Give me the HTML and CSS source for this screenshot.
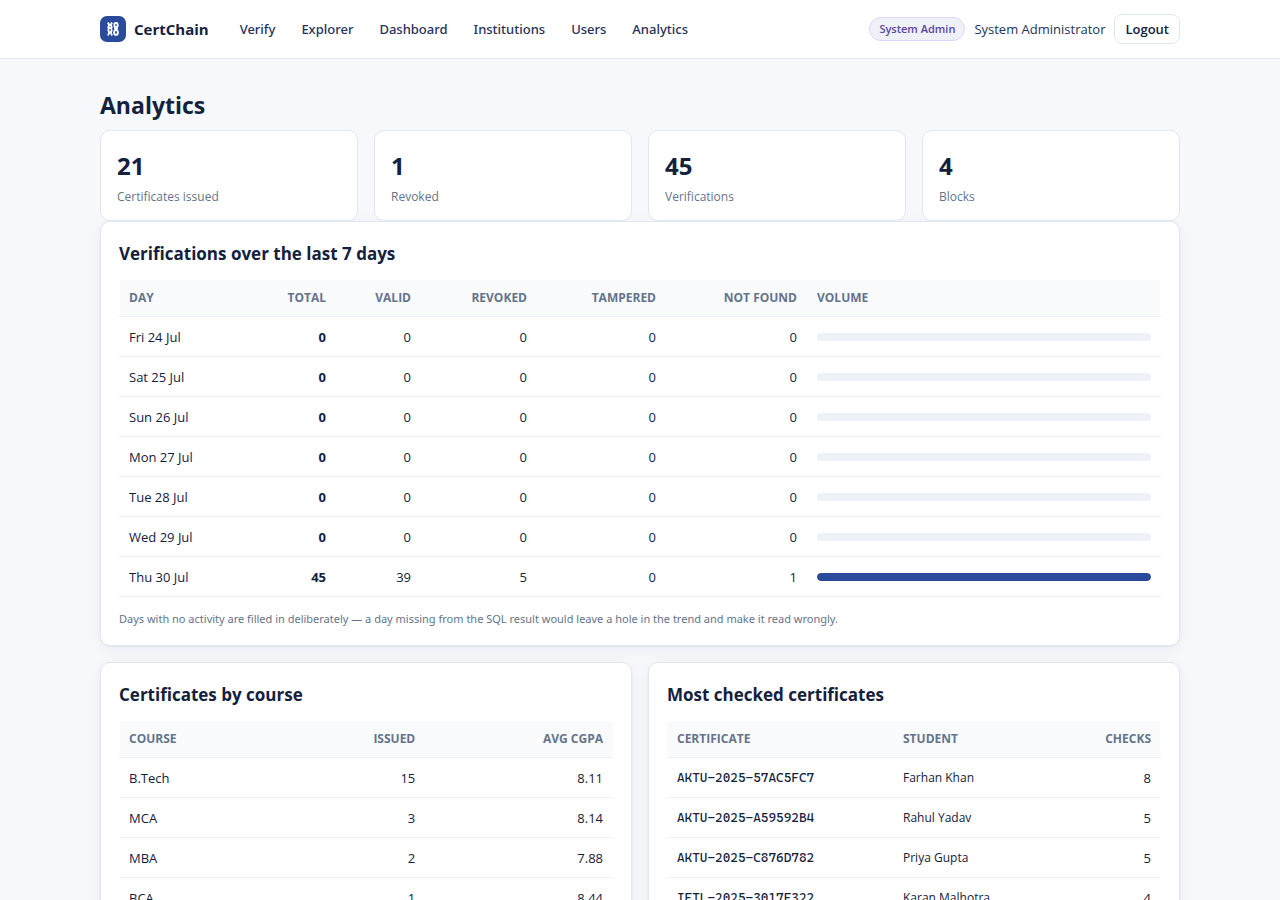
FILE: index.html
```
<!DOCTYPE html>
<html lang="en">
<head>
    <meta charset="UTF-8">
    <meta name="viewport" content="width=device-width, initial-scale=1.0">
    <title>Analytics - CertChain</title>
    <link rel="stylesheet" href="styles.css">
</head>
<body>
    <header class="topbar">
        <div class="container topbar-inner">
            <a class="brand" href="#">
                <span class="brand-mark">
                    <svg width="12" height="14" viewBox="0 0 12 14" fill="none" stroke="#fff" stroke-width="1.9" aria-hidden="true">
                        <path d="M1 0.5L2.2 3L1 6M5 0.5L3.8 3L5 6M1.5 3H4.5M0.8 6.3H5.2M1 13.5L2.2 10.5L1 7.5M5 13.5L3.8 10.5L5 7.5M1.5 10.5H4.5"/>
                        <ellipse cx="9" cy="3" rx="1.7" ry="2.2"/>
                        <path d="M9 5V9M7 6.5H11"/>
                        <ellipse cx="9" cy="10.5" rx="1.9" ry="2.4"/>
                    </svg>
                </span>
                CertChain
            </a>
            <nav class="nav">
                <a href="#">Verify</a>
                <a href="#">Explorer</a>
                <a href="#">Dashboard</a>
                <a href="#">Institutions</a>
                <a href="#">Users</a>
                <a href="#">Analytics</a>
            </nav>
            <div class="user">
                <span class="role">System Admin</span>
                <span class="user-name">System Administrator</span>
                <button type="button" class="btn">Logout</button>
            </div>
        </div>
    </header>

    <main class="container main">
        <h1>Analytics</h1>

        <div class="stats">
            <div class="stat"><div class="stat-num">21</div><div class="stat-label">Certificates issued</div></div>
            <div class="stat"><div class="stat-num">1</div><div class="stat-label">Revoked</div></div>
            <div class="stat"><div class="stat-num">45</div><div class="stat-label">Verifications</div></div>
            <div class="stat"><div class="stat-num">4</div><div class="stat-label">Blocks</div></div>
        </div>

        <section class="card">
            <h2>Verifications over the last 7 days</h2>
            <table class="table">
                <colgroup>
                    <col class="col-day"><col class="col-total"><col class="col-valid"><col class="col-revoked">
                    <col class="col-tampered"><col class="col-missing"><col>
                </colgroup>
                <thead>
                    <tr><th>Day</th><th class="num">Total</th><th class="num">Valid</th><th class="num">Revoked</th><th class="num">Tampered</th><th class="num">Not found</th><th>Volume</th></tr>
                </thead>
                <tbody>
                    <tr><td>Fri 24 Jul</td><td class="num"><strong>0</strong></td><td class="num">0</td><td class="num">0</td><td class="num">0</td><td class="num">0</td><td><div class="bar"><div class="bar-fill" style="width: 0%"></div></div></td></tr>
                    <tr><td>Sat 25 Jul</td><td class="num"><strong>0</strong></td><td class="num">0</td><td class="num">0</td><td class="num">0</td><td class="num">0</td><td><div class="bar"><div class="bar-fill" style="width: 0%"></div></div></td></tr>
                    <tr><td>Sun 26 Jul</td><td class="num"><strong>0</strong></td><td class="num">0</td><td class="num">0</td><td class="num">0</td><td class="num">0</td><td><div class="bar"><div class="bar-fill" style="width: 0%"></div></div></td></tr>
                    <tr><td>Mon 27 Jul</td><td class="num"><strong>0</strong></td><td class="num">0</td><td class="num">0</td><td class="num">0</td><td class="num">0</td><td><div class="bar"><div class="bar-fill" style="width: 0%"></div></div></td></tr>
                    <tr><td>Tue 28 Jul</td><td class="num"><strong>0</strong></td><td class="num">0</td><td class="num">0</td><td class="num">0</td><td class="num">0</td><td><div class="bar"><div class="bar-fill" style="width: 0%"></div></div></td></tr>
                    <tr><td>Wed 29 Jul</td><td class="num"><strong>0</strong></td><td class="num">0</td><td class="num">0</td><td class="num">0</td><td class="num">0</td><td><div class="bar"><div class="bar-fill" style="width: 0%"></div></div></td></tr>
                    <tr><td>Thu 30 Jul</td><td class="num"><strong>45</strong></td><td class="num">39</td><td class="num">5</td><td class="num">0</td><td class="num">1</td><td><div class="bar"><div class="bar-fill" style="width: 100%"></div></div></td></tr>
                </tbody>
            </table>
            <p class="hint">Days with no activity are filled in deliberately — a day missing from the SQL result would leave a hole in the trend and make it read wrongly.</p>
        </section>

        <div class="grid-2">
            <section class="card">
                <h2>Certificates by course</h2>
                <table class="table">
                    <colgroup><col class="col-course"><col class="col-issued"><col></colgroup>
                    <thead>
                        <tr><th>Course</th><th class="num">Issued</th><th class="num">Avg CGPA</th></tr>
                    </thead>
                    <tbody>
                        <tr><td>B.Tech</td><td class="num">15</td><td class="num">8.11</td></tr>
                        <tr><td>MCA</td><td class="num">3</td><td class="num">8.14</td></tr>
                        <tr><td>MBA</td><td class="num">2</td><td class="num">7.88</td></tr>
                        <tr><td>BCA</td><td class="num">1</td><td class="num">8.44</td></tr>
                    </tbody>
                </table>
            </section>

            <section class="card">
                <h2>Most checked certificates</h2>
                <table class="table">
                    <colgroup><col class="col-cert"><col class="col-student"><col></colgroup>
                    <thead>
                        <tr><th>Certificate</th><th>Student</th><th class="num">Checks</th></tr>
                    </thead>
                    <tbody>
                        <tr><td class="mono">AKTU-2025-57AC5FC7</td><td class="small">Farhan Khan</td><td class="num">8</td></tr>
                        <tr><td class="mono">AKTU-2025-A59592B4</td><td class="small">Rahul Yadav</td><td class="num">5</td></tr>
                        <tr><td class="mono">AKTU-2025-C876D782</td><td class="small">Priya Gupta</td><td class="num">5</td></tr>
                        <tr><td class="mono">IETL-2025-3017E322</td><td class="small">Karan Malhotra</td><td class="num">4</td></tr>
                    </tbody>
                </table>
            </section>
        </div>
    </main>
</body>
</html>
```
FILE: styles.css
```
* {
    box-sizing: border-box;
}
body {
    margin: 0;
    font-family: "Segoe UI", "Open Sans", "Noto Sans", sans-serif;
    font-size: 13px;
    line-height: 20px;
    background-color: #f6f8fc;
    color: #14213d;
}
.container {
    max-width: 1120px;
    margin: 0 auto;
    padding: 0 20px;
}
.topbar {
    background-color: #fff;
    border-bottom: 1px solid #e2e8f0;
}
.topbar-inner {
    display: flex;
    align-items: center;
    height: 58px;
}
.brand {
    display: flex;
    align-items: center;
    gap: 8px;
    font-size: 15px;
    font-weight: 700;
    color: #14213d;
    text-decoration: none;
}
.brand-mark {
    display: flex;
    align-items: center;
    justify-content: center;
    width: 26px;
    height: 26px;
    border-radius: 7px;
    background-color: #2a4b9b;
}
.nav {
    display: flex;
    gap: 26px;
    margin-left: 31px;
}
.nav a {
    color: #24335a;
    font-family: "Segoe UI", "Noto Sans", sans-serif;
    font-weight: 500;
    text-decoration: none;
}
.nav a:hover {
    color: #2a4b9b;
}
.user {
    display: flex;
    align-items: center;
    gap: 9px;
    margin-left: auto;
}
.role {
    padding: 1px 9px;
    border: 1px solid #ddd6fe;
    border-radius: 999px;
    background-color: #eef1f8;
    color: #5b46a0;
    font-size: 11px;
    font-weight: 600;
}
.user-name {
    color: #24335a;
}
.btn {
    height: 30px;
    padding: 0 10px;
    border: 1px solid #e2e8f0;
    border-radius: 8px;
    background-color: #fff;
    color: #14213d;
    font-family: inherit;
    font-size: 13px;
    font-weight: 600;
    cursor: pointer;
}
.main {
    padding-top: 29px;
    padding-bottom: 48px;
}
h1 {
    margin: 0 0 8px;
    font-size: 23px;
    line-height: 34px;
}
h2 {
    margin: 0 0 12px;
    font-size: 17px;
    line-height: 28px;
}
.stats {
    display: grid;
    grid-template-columns: repeat(4, 1fr);
    gap: 16px;
}
.stat {
    padding: 16px 16px 13px;
    border: 1px solid #e2e8f0;
    border-radius: 10px;
    background-color: #fff;
}
.stat-num {
    margin-bottom: 2px;
    font-size: 24px;
    font-weight: 700;
    line-height: 38px;
}
.stat-label {
    color: #64748b;
    font-size: 12px;
}
.card {
    padding: 18px;
    border: 1px solid #e2e8f0;
    border-radius: 10px;
    background-color: #fff;
    box-shadow: 0 1px 2px rgba(20, 33, 61, 0.06), 0 4px 16px rgba(20, 33, 61, 0.05);
}
.grid-2 {
    display: grid;
    grid-template-columns: 1fr 1fr;
    gap: 16px;
    margin-top: 16px;
}
.table {
    width: 100%;
    table-layout: fixed;
    border-collapse: collapse;
}
.table th {
    padding: 8px 10px;
    border-bottom: 1px solid #eef1f8;
    background-color: #fafbfd;
    color: #64748b;
    font-size: 12px;
    font-weight: 700;
    text-align: left;
    text-transform: uppercase;
}
.table td {
    height: 40px;
    padding: 0 10px;
    border-bottom: 1px solid #eef1f8;
}
.table .num {
    text-align: right;
}
.table .mono {
    font-family: "Cascadia Mono", "DejaVu Sans Mono", monospace;
    font-size: 13px;
}
.table .small {
    font-size: 12px;
}
.col-day {
    width: 130px;
}
.col-total {
    width: 87px;
}
.col-valid {
    width: 85px;
}
.col-revoked {
    width: 116px;
}
.col-tampered {
    width: 129px;
}
.col-missing {
    width: 141px;
}
.col-course {
    width: 38%;
}
.col-issued {
    width: 24%;
}
.col-cert {
    width: 226px;
}
.col-student {
    width: 150px;
}
.bar {
    height: 8px;
    border-radius: 4px;
    background-color: #eef1f8;
    overflow: hidden;
}
.bar-fill {
    height: 100%;
    border-radius: 4px;
    background-color: #2a4b9b;
}
.hint {
    margin: 13px 0 0;
    color: #64748b;
    font-family: "Segoe UI", "Noto Sans", sans-serif;
    font-size: 11px;
    line-height: 17px;
}
```
